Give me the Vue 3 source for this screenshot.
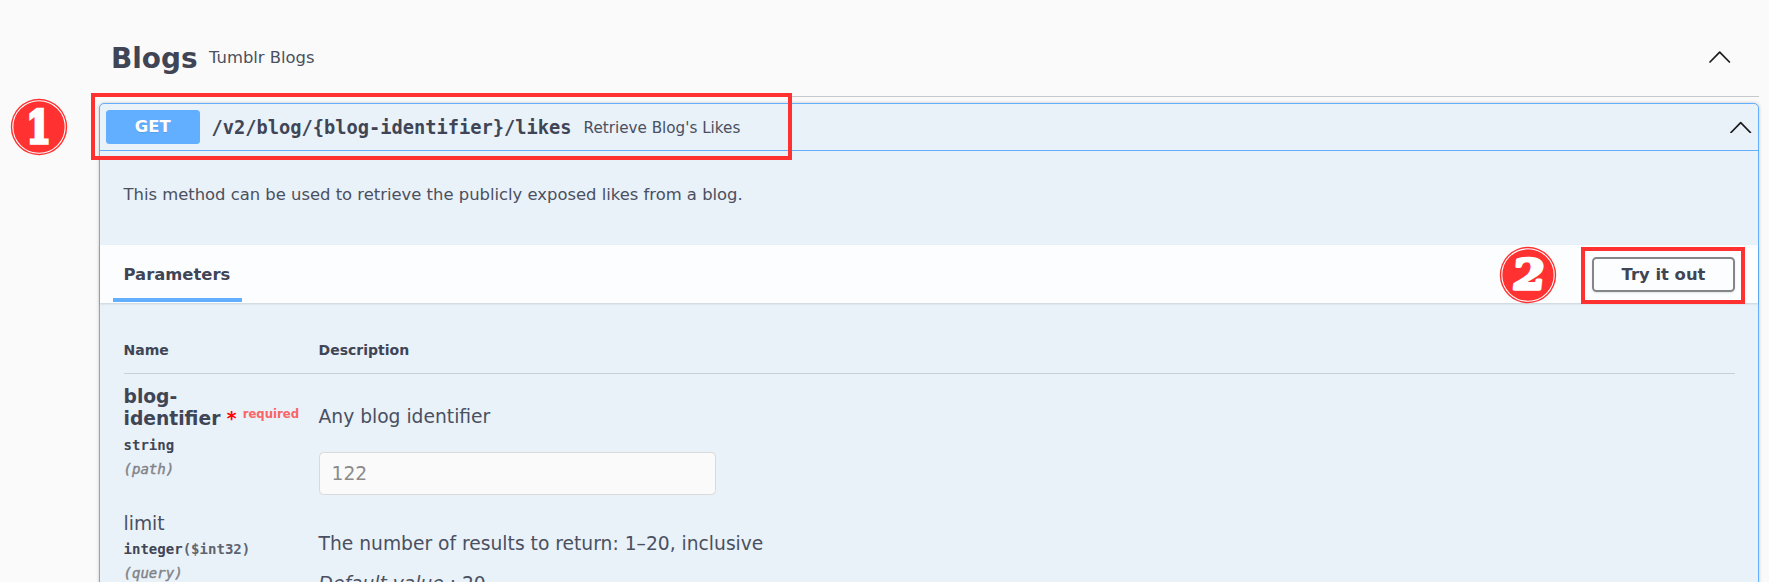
<script setup>
const params = [
  { name: 'blog-identifier', required: true, type: 'string', format: '', place: '(path)', text: 'Any blog identifier', input: '122' },
  { name: 'limit', required: false, type: 'integer', format: '($int32)', place: '(query)', text: 'The number of results to return: 1–20, inclusive', fallback: '20' },
]
</script>

<template>
  <main class="page">
    <header class="tag">
      <h2>Blogs</h2>
      <span class="tag-text">Tumblr Blogs</span>
      <svg class="chevron" viewBox="0 0 22 12"><path d="M1 11 10.7 1.2 20.4 11" /></svg>
    </header>

    <section class="block">
      <div class="summary">
        <span class="method">GET</span>
        <code class="path">/v2/blog/{blog-identifier}/likes</code>
        <span class="summary-text">Retrieve Blog's Likes</span>
        <svg class="chevron" viewBox="0 0 22 12"><path d="M1 11.5 10.7 1.7 20.4 11.5" /></svg>
      </div>
      <p class="about">This method can be used to retrieve the publicly exposed likes from a blog.</p>
      <div class="bar">
        <h4 class="tab">Parameters</h4>
        <button class="try">Try it out</button>
      </div>
      <div class="params">
        <div class="row head"><span>Name</span><span>Description</span></div>
        <div v-for="p in params" :key="p.name" class="row param" :class="{ required: p.required }">
          <div>
            <div class="name">{{ p.name }}<template v-if="p.required"><span class="star">&nbsp;*</span><span class="req">required</span></template></div>
            <div class="type">{{ p.type }}<span>{{ p.format }}</span></div>
            <div class="place">{{ p.place }}</div>
          </div>
          <div class="desc">
            <p>{{ p.text }}</p>
            <input v-if="p.input" :placeholder="p.input" />
            <p v-if="p.fallback" class="fallback"><i>Default value</i> : {{ p.fallback }}</p>
          </div>
        </div>
      </div>
    </section>

    <div class="mark mark-path"></div>
    <div class="mark mark-try"></div>
    <svg class="badge badge-one" viewBox="0 0 58 58">
      <circle class="disc" cx="29" cy="29" r="28.2" />
      <circle class="ring" cx="29" cy="29" r="26.2" />
      <text class="one" transform="translate(28.6 45.2) scale(.82 1.05)" x="0" y="0" text-anchor="middle">1</text>
    </svg>
    <svg class="badge badge-two" viewBox="0 0 58 58">
      <circle class="disc" cx="29" cy="29" r="28.2" />
      <circle class="ring" cx="29" cy="29" r="26.2" />
      <text class="two" transform="translate(28.6 43.4) skewX(-6) scale(1.14 1.02)" x="0" y="0" text-anchor="middle">2</text>
    </svg>
  </main>
</template>

<style>
body { background: #fafafa; overflow: hidden; }
</style>

<style scoped>
* { box-sizing: border-box; }
.page {
  position: relative;
  height: 582px;
  overflow: hidden;
  padding: 20px 10px 0 99px;
  background: #fafafa;
  color: #4a505f;
  font-family: "DejaVu Sans", sans-serif;
}
h2, h4, p { margin: 0; }
.tag {
  display: flex;
  align-items: center;
  height: 77px;
  padding: 0 28px 3px 12px;
  border-bottom: 1px solid #c6c8cc;
}
h2 { width: 98px; padding-top: 5px; color: #3f4555; font-size: 27.9px; line-height: 32px; }
.tag-text { padding-top: 2px; font-size: 16.4px; }
.chevron { width: 22px; height: 12px; margin-left: auto; fill: none; stroke: #1b1b1b; stroke-width: 1.7; stroke-linecap: round; stroke-linejoin: round; }
.tag .chevron { margin-top: 1px; }
.block {
  height: 520px;
  margin-top: 6px;
  border: 1px solid #61affe;
  border-radius: 5px;
  background: #e9f1f9;
  box-shadow: 0 0 3.5px rgba(0, 0, 0, .22);
}
.summary {
  display: flex;
  align-items: center;
  height: 47px;
  padding: 0 6px;
  border-bottom: 1px solid #61affe;
}
.method {
  width: 93.5px;
  height: 34px;
  border-radius: 3.5px;
  background: #61affe;
  color: #fff;
  font-size: 16.4px;
  font-weight: 700;
  line-height: 34px;
  text-align: center;
  text-shadow: 0 1px 0 rgba(0, 0, 0, .1);
}
.path { margin-left: 12px; color: #3f4555; font: 700 18.7px "DejaVu Sans Mono", monospace; }
.summary-text { margin-left: 12px; padding-top: 2px; font-size: 15.2px; }
.about { height: 94px; padding: 32px 23.5px 0; font-size: 16.4px; line-height: 24px; }
.bar {
  display: flex;
  position: relative;
  align-items: center;
  justify-content: space-between;
  height: 58px;
  padding: 0 23px 0 13px;
  background: #fcfdfe;
  box-shadow: 0 1px 2px rgba(0, 0, 0, .13);
}
.tab { align-self: flex-end; width: 128.5px; height: 42px; margin-bottom: 1px; padding-left: 10.5px; border-bottom: 4.5px solid #61affe; color: #3f4555; font-size: 16.4px; line-height: 30px; }
.try {
  width: 143px;
  height: 35px;
  padding: 1px 0 0;
  border: 2px solid #868686;
  border-radius: 4.5px;
  background: #fcfdfe;
  box-shadow: 0 1px 2px rgba(0, 0, 0, .1);
  color: #3f4555;
  font: 700 16.4px "DejaVu Sans", sans-serif;
}
.params { padding: 25px 23.5px 0; }
.row { display: grid; grid-template-columns: 195px 1fr; }
.head { height: 46px; padding-top: 14px; border-bottom: 1px solid #c6cfda; color: #3f4555; font-size: 14.04px; font-weight: 700; line-height: 17px; }
.param { padding-top: 12px; font-size: 18.7px; }
.param.required { height: 127px; }
.name { line-height: 22.4px; }
.required .name { color: #3f4555; font-weight: 700; }
.required .name .star { color: #f00; }
.required .name .req { position: relative; top: -7px; padding-left: 6px; color: #f96666; font-size: 11.7px; line-height: 1; }
.type { height: 27px; padding-top: 6px; color: #3f4555; font: 700 14.04px/17px "DejaVu Sans Mono", monospace; }
.type span { color: #5d6470; }
.place { margin-top: 3px; color: #808285; font: italic 400 14.04px/17px "DejaVu Sans Mono", monospace; -webkit-text-stroke: .4px #808285; }
.desc { padding-top: 19.5px; line-height: 22px; }
input {
  display: block;
  width: 397.5px;
  height: 43px;
  margin-top: 24px;
  padding: 0 12px;
  border: 1px solid #d9d9d9;
  border-radius: 4.5px;
  background: #fafafa;
  font: 18.7px "DejaVu Sans", sans-serif;
}
input::placeholder { color: #8b8b8b; }
.fallback { margin-top: 18px; }
.mark { position: absolute; border: 4px solid #ff3131; }
.mark-path { top: 93.4px; left: 91px; width: 700.5px; height: 66.6px; }
.mark-try { top: 247px; left: 1581px; width: 164px; height: 56.5px; }
.badge { position: absolute; width: 58px; height: 58px; }
.badge-one { left: 9.8px; top: 98px; }
.badge-two { left: 1498.5px; top: 246px; }
.disc { fill: #ff3131; }
.ring { fill: none; stroke: #fff; stroke-width: 1.1; }
.badge text { fill: #fff; stroke: #fff; font-family: "DejaVu Serif", serif; font-weight: 700; }
.one { font-size: 42.5px; stroke-width: 3.4; }
.two { font-size: 40.5px; stroke-width: 3.2; stroke-linejoin: round; }
</style>
